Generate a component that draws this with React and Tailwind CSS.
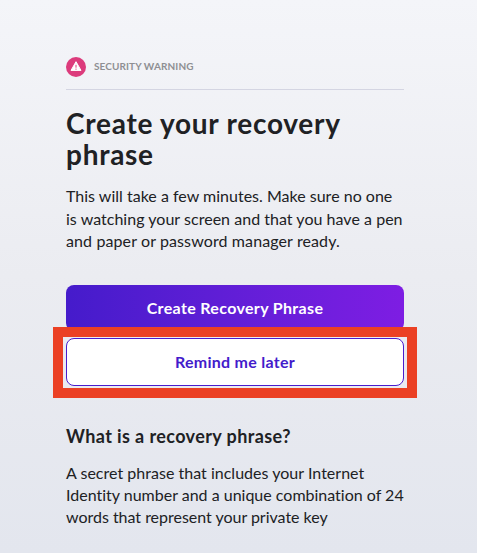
function WarningIcon() {
  return (
    <svg className="size-5 shrink-0" viewBox="0 0 20 20">
      <circle cx="10" cy="10" r="10" fill="#dc3b7c" />
      <path d="M10 4.7 15 13.4H5Z" fill="#fff" stroke="#fff" strokeWidth="1" strokeLinejoin="round" />
      <path d="M10 7.8v2.9M10 11.6v1.1" stroke="#dc3b7c" strokeWidth="1" />
    </svg>
  );
}

export default function App() {
  return (
    <main className="h-[553px] w-full overflow-hidden bg-linear-to-b from-[#f4f5f9] via-[#ebecf1] to-[#e3e6ee] px-[66px] pt-[57px] font-['Lato',sans-serif] text-[#202124] [font-variant-ligatures:none]">
      <div className="w-[338px]">
        <div className="flex h-[33px] items-start gap-2 border-b border-[#d4d5e2]">
          <WarningIcon />
          <span className="whitespace-nowrap text-[10px] font-bold leading-[18px] tracking-[0.1px] text-[#8e8f93]">SECURITY WARNING</span>
        </div>
        <h1 className="mt-[18px] whitespace-nowrap text-[28px] font-bold leading-[31px] tracking-[0.73px]">
          <span className="block">Create your recovery</span>
          <span className="block">phrase</span>
        </h1>
        <p className="mt-[15.3px] whitespace-nowrap text-[16px] leading-[22.5px]">
          <span className="block tracking-[0.01px]">This will take a few minutes. Make sure no one</span>
          <span className="block tracking-[0.03px]">is watching your screen and that you have a pen</span>
          <span className="block tracking-[0.11px]">and paper or password manager ready.</span>
        </p>
        <div className="mt-[32.2px] flex flex-col">
          <button className="h-[46px] rounded-lg bg-linear-to-r from-[#451bcb] to-[#7e1de3] text-base font-bold tracking-[0.34px] text-white">
            <span>Create Recovery Phrase</span>
          </button>
          <div className="relative -mx-[13px] -mt-[4px] border-[10px] border-[#eb4024] bg-[#eaebf1] px-[3px] pb-[2px] pt-px">
            <button className="block h-12 w-full rounded-lg border border-[#4a1dcd] bg-white text-base font-bold tracking-[0.28px] text-[#431bcb]">
              <span>Remind me later</span>
            </button>
          </div>
        </div>
        <h2 className="mt-[26px] whitespace-nowrap text-[18px] font-bold leading-6 tracking-[0.4px]">
          <span>What is a recovery phrase?</span>
        </h2>
        <p className="mt-[13.6px] whitespace-nowrap text-[16px] leading-[22.2px]">
          <span className="block tracking-[0.02px]">A secret phrase that includes your Internet</span>
          <span className="block">Identity number and a unique combination of 24</span>
          <span className="block tracking-[-0.02px]">words that represent your private key</span>
        </p>
      </div>
    </main>
  );
}
